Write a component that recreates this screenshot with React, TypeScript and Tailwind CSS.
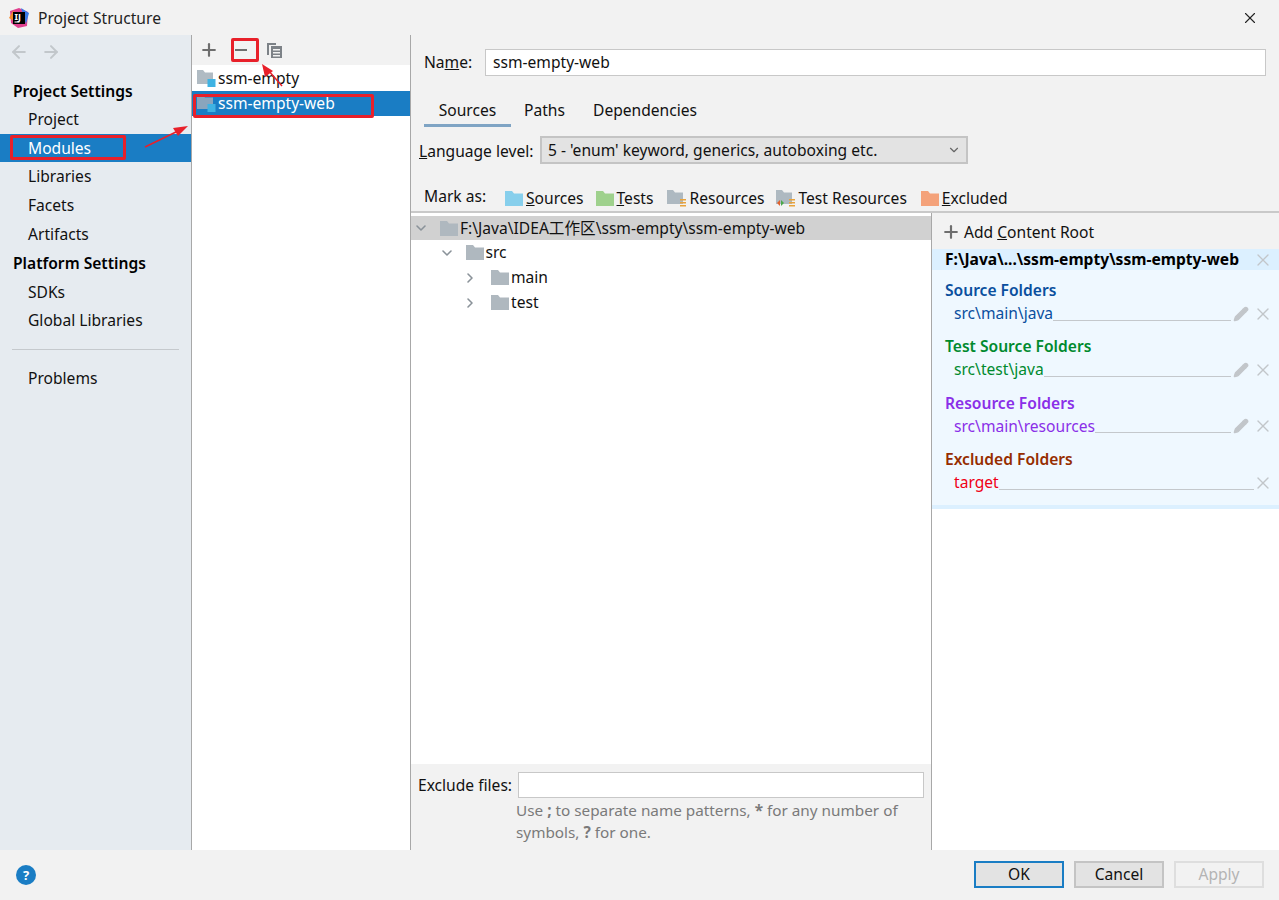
import { ChevronDown, ChevronRight, Plus, X, Pencil, ArrowLeft, ArrowRight } from "lucide-react";

type FolderProps = { color: string; size?: number; className?: string };

function Folder({ color, size = 18, className }: FolderProps) {
  return (
    <svg width={size} height={size - 3} viewBox="0 0 18 15" className={className}>
      <path d="M0 0h7l2 2.5h9V15H0z" fill={color} />
    </svg>
  );
}

function ModuleFolder({ selected }: { selected?: boolean }) {
  return (
    <svg width="20" height="19" viewBox="0 0 20 19" className="shrink-0">
      <path d="M1 1h6l2 2.5h8V15H1z" fill={selected ? "#89a5bd" : "#b0bbc3"} />
      <rect x="11.5" y="10" width="8" height="8" fill="#3fb3e3" />
    </svg>
  );
}

function Stripes() {
  return (
    <g fill="#e8a33d">
      <rect x="10" y="9" width="6" height="1.5" />
      <rect x="10" y="12" width="6" height="1.5" />
      <rect x="10" y="15" width="6" height="1.5" />
    </g>
  );
}

function NavRow({ label, active }: { label: string; active?: boolean }) {
  return (
    <div className={`h-[28.7px] flex items-center pl-[28px] ${active ? "bg-[#1a7dc4] text-white" : ""}`}>{label}</div>
  );
}

function SectionTitle({ label, className }: { label: string; className: string }) {
  return <div className={`flex items-center pl-[13px] font-semibold text-black ${className}`}>{label}</div>;
}

function FolderGroup({ title, path, titleColor, pathColor, editable = true }: { title: string; path: string; titleColor: string; pathColor: string; editable?: boolean }) {
  return (
    <div className="mb-[10.4px]">
      <div className={`h-[25px] flex items-center pl-[13px] font-semibold ${titleColor}`}>{title}</div>
      <div className="h-[21px] flex items-center pl-[22px] pr-[6px]">
        <span className={pathColor}>{path}</span>
        <div className="flex-1 h-[14px] border-b border-[#c4c8cc]" />
        {editable && <Pencil size={16} fill="#c2c6ca" className="text-[#c2c6ca] ml-[2px] shrink-0" />}
        <X size={20} strokeWidth={1.6} className={`text-[#c2c6ca] shrink-0 ${editable ? "ml-[4px]" : "-ml-[1px]"}`} />
      </div>
    </div>
  );
}

function TreeRow({ depth, open, label, selected }: { depth: number; open?: boolean; label: string; selected?: boolean }) {
  return (
    <div className={`flex items-center ${selected ? "h-[24px] bg-[#d1d1d1]" : "h-[25px]"}`} style={{ paddingLeft: 2 + depth * 25.5 }}>
      {open ? (
        <ChevronDown size={16} strokeWidth={2.4} className="text-[#8a9299] shrink-0" />
      ) : (
        <ChevronRight size={16} strokeWidth={2.4} className="text-[#8a9299] shrink-0 -ml-[2px] mr-[2px]" />
      )}
      <Folder color="#afb8bf" className="ml-[11px] mr-[2px] shrink-0" />
      <span>{label}</span>
    </div>
  );
}

export default function App() {
  return (
    <div className="w-[1279px] h-[900px] relative overflow-hidden bg-[#f2f2f2] text-[15.6px] leading-[23px] text-[#111] flex flex-col" style={{ fontFamily: '"Noto Sans", "Noto Sans CJK SC", sans-serif' }}>
      {/* title bar */}
      <div className="h-[35px] shrink-0 flex items-center pl-[9px] pr-[20px] pt-[1px]">
        <svg width="20" height="20" viewBox="0 0 20 20" className="shrink-0">
          <path d="M1 3l9-3 9 4-1 14-9 2-7-5z" fill="#e0408f" />
          <path d="M0 10l4-7 6 3-2 9z" fill="#f58a2c" />
          <path d="M12 0l8 5-3 11z" fill="#3b7ce6" />
          <rect x="4" y="4" width="12" height="12" fill="#000" />
          <rect x="5.5" y="13.5" width="5" height="1" fill="#fff" />
          <text x="5.5" y="12" fontSize="9" fontWeight="700" fill="#fff">IJ</text>
        </svg>
        <span className="ml-[9px] text-[#222]">Project Structure</span>
        <X size={18} strokeWidth={1.5} className="ml-auto text-[#222]" />
      </div>

      <div className="flex-1 flex min-h-0">
        {/* left nav */}
        <div className="w-[192px] shrink-0 bg-[#e6ebf0] border-r border-[#a8a8a8]">
          <div className="h-[43px] flex items-center gap-[12px] pl-[9px] pb-[9px] text-[#c2c7cb]">
            <ArrowLeft size={20} strokeWidth={2.4} />
            <ArrowRight size={20} strokeWidth={2.4} />
          </div>
          <SectionTitle label="Project Settings" className="h-[27px]" />
          <NavRow label="Project" />
          <NavRow label="Modules" active />
          <NavRow label="Libraries" />
          <NavRow label="Facets" />
          <NavRow label="Artifacts" />
          <SectionTitle label="Platform Settings" className="h-[28px] mt-[1.5px]" />
          <NavRow label="SDKs" />
          <NavRow label="Global Libraries" />
          <div className="h-[29px] flex items-center px-[12px]">
            <div className="w-full h-px bg-[#c5c9cd]" />
          </div>
          <NavRow label="Problems" />
        </div>

        {/* modules list */}
        <div className="w-[219px] shrink-0 bg-white border-r border-[#a8a8a8] flex flex-col">
          <div className="h-[30px] shrink-0 bg-[#f2f2f2] flex items-center pl-[7px] gap-[14px] text-[#6e6e6e]">
            <Plus size={20} strokeWidth={2.6} />
            <svg width="16" height="16" viewBox="0 0 16 16">
              <rect x="2" y="7" width="12" height="2" fill="#6e6e6e" />
            </svg>
            <svg width="17" height="17" viewBox="0 0 17 17" className="ml-[3px]">
              <path d="M1 1h9v2H3v10H1z" fill="#7d8287" />
              <path d="M5 4h11v12H5z" fill="#7d8287" />
              <path d="M7 7h7v1.4H7zM7 10h7v1.4H7zM7 13h7v1.4H7z" fill="#f2f2f2" />
            </svg>
          </div>
          <div className="h-[26px] flex items-center pl-[4px] gap-[2px]">
            <ModuleFolder />
            <span>ssm-empty</span>
          </div>
          <div className="h-[25px] flex items-center pl-[4px] gap-[2px] bg-[#1a7dc4] text-white">
            <ModuleFolder selected />
            <span>ssm-empty-web</span>
          </div>
        </div>

        {/* details */}
        <div className="flex-1 min-w-0 flex flex-col">
          <div className="h-[54px] shrink-0 flex items-center pl-[13px] pr-[13px]">
            <span className="w-[61px]">Na<u>m</u>e:</span>
            <div className="flex-1 h-[27px] bg-white border border-[#c8c8c8] flex items-center pl-[7px]">ssm-empty-web</div>
          </div>
          <div className="h-[38px] shrink-0 flex pl-[13px]">
            <div className="w-[87px] flex items-center justify-center border-b-[3px] border-[#7fa4c4] pt-[7px]">Sources</div>
            <div className="w-[67px] flex items-center justify-center pt-[4px]">Paths</div>
            <div className="w-[134px] flex items-center justify-center pt-[4px]">Dependencies</div>
          </div>
          <div className="h-[40px] shrink-0 flex items-center pl-[8px] pt-[9px]">
            <span className="w-[121px] whitespace-nowrap"><u>L</u>anguage level:</span>
            <div className="w-[428px] h-[28px] -mt-[3px] bg-[#e3e3e3] border-2 border-[#c4c4c4] flex items-center pl-[6px] pr-[5px] justify-between">
              <span>5 - 'enum' keyword, generics, autoboxing etc.</span>
              <ChevronDown size={14} className="text-[#666]" />
            </div>
          </div>
          <div className="h-[46px] shrink-0 flex items-center pl-[13px] pt-[18px] border-b-2 border-[#c9c9c9]">
            <span className="w-[81px] -mt-[4px]">Mark as:</span>
            <Folder color="#87cfec" className="mr-[3px]" />
            <span className="mr-[12px]"><u>S</u>ources</span>
            <Folder color="#9fd18d" className="mr-[3px]" />
            <span className="mr-[14px]"><u>T</u>ests</span>
            <svg width="19" height="18" viewBox="0 0 19 18" className="mr-[3px]">
              <path d="M0 1h6l2 2.5h8V15H0z" fill="#aeb9c1" />
              <g transform="translate(3 1)"><Stripes /></g>
            </svg>
            <span className="mr-[12px]">Resources</span>
            <svg width="19" height="18" viewBox="0 0 19 18" className="mr-[3px]">
              <path d="M0 1h6l2 2.5h8V15H0z" fill="#aeb9c1" />
              <path d="M4 11v6l-3-3z" fill="#e2612c" />
              <path d="M5 11v6l3-3z" fill="#4aa84a" />
              <g transform="translate(3 1)"><Stripes /></g>
            </svg>
            <span className="mr-[14px]">Test Resources</span>
            <Folder color="#f4a27a" className="mr-[3px]" />
            <span><u>E</u>xcluded</span>
          </div>
          <div className="flex-1 min-h-0 flex">
            {/* content tree */}
            <div className="w-[521px] shrink-0 border-r border-[#a8a8a8] flex flex-col">
              <div className="flex-1 bg-white pt-[3px]">
                <TreeRow depth={0} open label="F:\Java\IDEA工作区\ssm-empty\ssm-empty-web" selected />
                <TreeRow depth={1} open label="src" />
                <TreeRow depth={2} label="main" />
                <TreeRow depth={2} label="test" />
              </div>
              <div className="h-[86px] shrink-0 bg-[#f2f2f2] pl-[7px] pr-[7px] pt-[8px]">
                <div className="flex items-center">
                  <span className="w-[100px] whitespace-nowrap">Exclude files:</span>
                  <div className="flex-1 h-[26px] bg-white border border-[#c8c8c8]" />
                </div>
                <div className="pl-[98px] mt-[1px] leading-[22px] text-[15.3px] text-[#7a7a7a] whitespace-nowrap">
                  <div>Use <b>;</b> to separate name patterns, <b>*</b> for any number of</div>
                  <div>symbols, <b>?</b> for one.</div>
                </div>
              </div>
            </div>

            {/* content roots */}
            <div className="flex-1 min-w-0 bg-white">
              <div className="h-[36px] bg-[#f2f2f2] flex items-center pl-[9px] pt-[2px] gap-[3px]">
                <Plus size={20} strokeWidth={2.6} className="text-[#6e6e6e]" />
                <span>Add <u>C</u>ontent Root</span>
              </div>
              <div className="h-[21px] bg-[#dcf0ff] flex items-center pl-[13px] pr-[6px] justify-between font-bold text-black">
                <span>F:\Java\...\ssm-empty\ssm-empty-web</span>
                <X size={20} strokeWidth={1.6} className="text-[#c2c6ca]" />
              </div>
              <div className="bg-[#eff8ff] pt-[8px] border-b-4 border-[#dcf0ff] h-[239px]">
                <FolderGroup title="Source Folders" path="src\main\java" titleColor="text-[#0a4f9e]" pathColor="text-[#0a4f9e]" />
                <FolderGroup title="Test Source Folders" path="src\test\java" titleColor="text-[#008a2e]" pathColor="text-[#008a2e]" />
                <FolderGroup title="Resource Folders" path="src\main\resources" titleColor="text-[#8a2fe8]" pathColor="text-[#8a2fe8]" />
                <FolderGroup title="Excluded Folders" path="target" titleColor="text-[#962d00]" pathColor="text-[#f00016]" editable={false} />
              </div>
            </div>
          </div>
        </div>
      </div>

      {/* footer */}
      <div className="h-[50px] shrink-0 flex items-center pl-[16px] pr-[15px]">
        <div className="w-[20px] h-[20px] rounded-full bg-[#1a7dc4] text-white text-[13px] font-bold flex items-center justify-center">?</div>
        <div className="ml-auto flex gap-[10px] -mt-[1px]">
          <div className="w-[90px] h-[27px] bg-[#e3e3e3] border-2 border-[#1a7dc4] flex items-center justify-center">OK</div>
          <div className="w-[90px] h-[27px] bg-[#e3e3e3] border-2 border-[#c4c4c4] flex items-center justify-center">Cancel</div>
          <div className="w-[90px] h-[27px] border-2 border-[#dedede] text-[#b4b4b4] flex items-center justify-center">Apply</div>
        </div>
      </div>

      {/* red annotations */}
      <div className="absolute left-[10px] top-[135px] w-[116px] h-[25px] border-[3px] border-[#e8202a] rounded-[2px]" />
      <div className="absolute left-[231px] top-[38px] w-[28px] h-[24px] border-[3px] border-[#e8202a] rounded-[2px]" />
      <div className="absolute left-[193px] top-[94px] w-[181px] h-[24px] border-[3px] border-[#e8202a] rounded-[2px]" />
      <svg width="1279" height="900" className="absolute left-0 top-0 pointer-events-none">
        <path d="M145 147L178 131" stroke="#e8202a" strokeWidth="1.5" />
        <path d="M188 126L173 128L178 136z" fill="#e8202a" />
        <path d="M282 86L268 70" stroke="#e8202a" strokeWidth="1.5" />
        <path d="M262 64L265 77L273 71z" fill="#e8202a" />
      </svg>
    </div>
  );
}
